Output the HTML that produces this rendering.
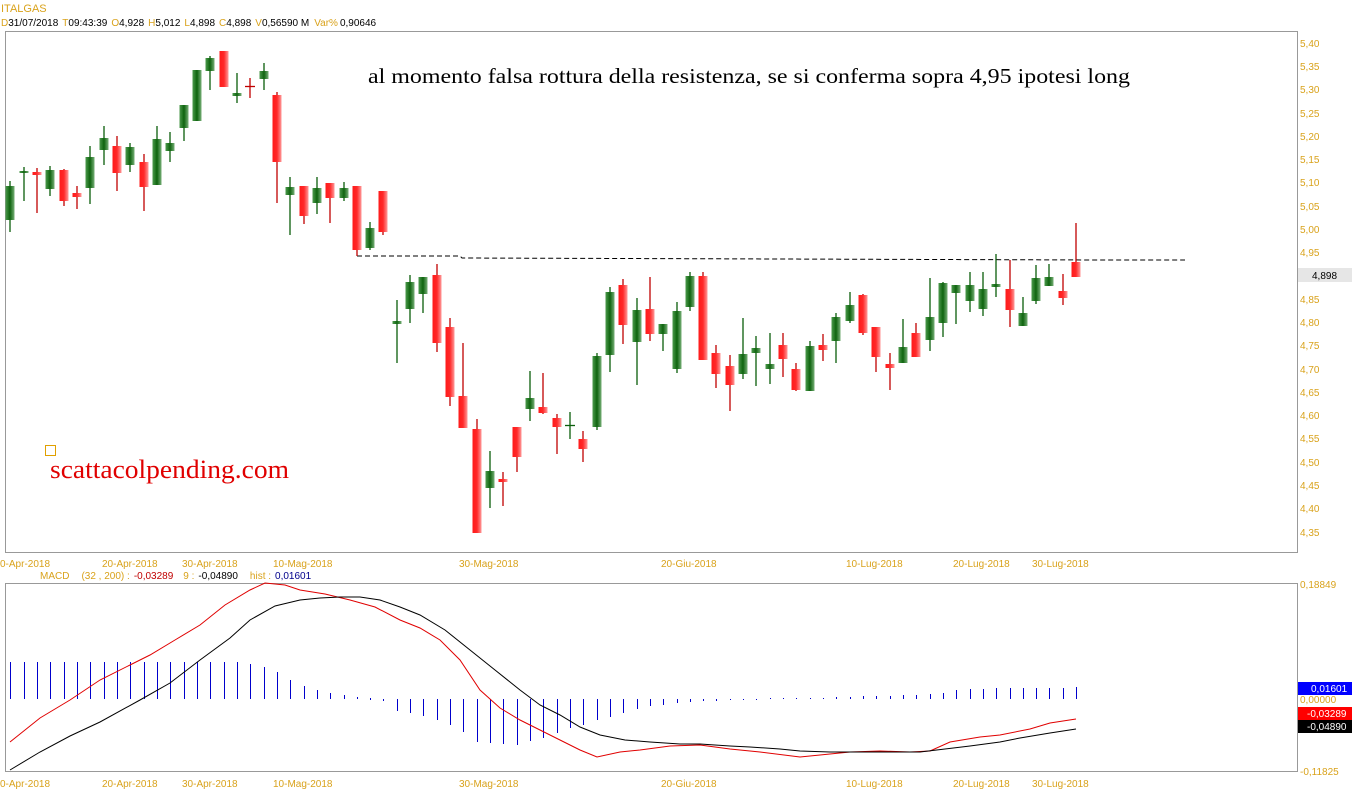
<!DOCTYPE html>
<html><head><meta charset="utf-8"><style>
body{margin:0;background:#fff;width:1352px;height:800px;overflow:hidden;font-family:"Liberation Sans",sans-serif}
svg{display:block}
.o{fill:#d9a21b}
.t{fill:#000}
text{font-family:"Liberation Sans",sans-serif;font-size:10px}
.ax{fill:#d9a21b;font-size:10px}
.wr{stroke:#c00000;stroke-width:1.3}
.wg{stroke:#0b5e0b;stroke-width:1.3}
.br{fill:url(#gr)}
.bg{fill:url(#gg)}
text.big{font-family:"Liberation Serif",serif;font-size:21px}
text.site{font-family:"Liberation Serif",serif;font-size:26px}
</style></head><body>
<svg width="1352" height="800" viewBox="0 0 1352 800">
<defs>
<linearGradient id="gr" x1="0" x2="1" y1="0" y2="0"><stop offset="0" stop-color="#ff1a1a"/><stop offset="0.5" stop-color="#ff2a2a"/><stop offset="1" stop-color="#ff9a9a"/></linearGradient>
<linearGradient id="gg" x1="0" x2="1" y1="0" y2="0"><stop offset="0" stop-color="#4d9a4d"/><stop offset="0.5" stop-color="#0e630e"/><stop offset="1" stop-color="#78b078"/></linearGradient>
</defs>
<text x="1" y="12" class="o" style="font-size:11px">ITALGAS</text>
<text x="1" y="26"><tspan class="o">D</tspan><tspan class="t">31/07/2018</tspan><tspan class="o" dx="4">T</tspan><tspan class="t">09:43:39</tspan><tspan class="o" dx="4">O</tspan><tspan class="t">4,928</tspan><tspan class="o" dx="4">H</tspan><tspan class="t">5,012</tspan><tspan class="o" dx="4">L</tspan><tspan class="t">4,898</tspan><tspan class="o" dx="4">C</tspan><tspan class="t">4,898</tspan><tspan class="o" dx="4">V</tspan><tspan class="t">0,56590 M</tspan><tspan class="o" dx="5">Var%</tspan><tspan class="t" dx="2">0,90646</tspan></text>
<rect x="5.5" y="31.5" width="1292" height="521" fill="none" stroke="#999"/>
<rect x="5.5" y="583.5" width="1292" height="188" fill="none" stroke="#999"/>
<g class="ax">
<text x="1300" y="47">5,40</text><text x="1300" y="70">5,35</text><text x="1300" y="93">5,30</text><text x="1300" y="117">5,25</text><text x="1300" y="140">5,20</text><text x="1300" y="163">5,15</text><text x="1300" y="186">5,10</text><text x="1300" y="210">5,05</text><text x="1300" y="233">5,00</text><text x="1300" y="256">4,95</text><text x="1300" y="303">4,85</text><text x="1300" y="326">4,80</text><text x="1300" y="349">4,75</text><text x="1300" y="373">4,70</text><text x="1300" y="396">4,65</text><text x="1300" y="419">4,60</text><text x="1300" y="442">4,55</text><text x="1300" y="466">4,50</text><text x="1300" y="489">4,45</text><text x="1300" y="512">4,40</text><text x="1300" y="536">4,35</text>
<text x="1300" y="588">0,18849</text><text x="1300" y="703">0,00000</text><text x="1300" y="775">-0,11825</text>
</g>
<rect x="1298" y="268" width="54" height="14" fill="#e6e6e6"/>
<text x="1312" y="279" fill="#000">4,898</text>
<g class="ax">
<text x="0" y="567">0-Apr-2018</text><text x="102" y="567">20-Apr-2018</text><text x="182" y="567">30-Apr-2018</text><text x="273" y="567">10-Mag-2018</text><text x="459" y="567">30-Mag-2018</text><text x="661" y="567">20-Giu-2018</text><text x="846" y="567">10-Lug-2018</text><text x="953" y="567">20-Lug-2018</text><text x="1032" y="567">30-Lug-2018</text>
<text x="0" y="787">0-Apr-2018</text><text x="102" y="787">20-Apr-2018</text><text x="182" y="787">30-Apr-2018</text><text x="273" y="787">10-Mag-2018</text><text x="459" y="787">30-Mag-2018</text><text x="661" y="787">20-Giu-2018</text><text x="846" y="787">10-Lug-2018</text><text x="953" y="787">20-Lug-2018</text><text x="1032" y="787">30-Lug-2018</text>
</g>
<text x="40" y="579"><tspan class="o">MACD</tspan><tspan class="o" dx="12">(32 , 200) :</tspan><tspan fill="#c00000" dx="4">-0,03289</tspan><tspan class="o" dx="10">9 :</tspan><tspan class="t" dx="4">-0,04890</tspan><tspan class="o" dx="12">hist :</tspan><tspan fill="#00008b" dx="4">0,01601</tspan></text>
<text x="368" y="83" class="big" fill="#000" textLength="762" lengthAdjust="spacingAndGlyphs">al momento falsa rottura della resistenza, se si conferma sopra 4,95 ipotesi long</text>
<rect x="45.5" y="445.5" width="10" height="10" fill="none" stroke="#e0a000"/>
<text x="50" y="478" class="site" fill="#e00000" textLength="239" lengthAdjust="spacingAndGlyphs">scattacolpending.com</text>
<polyline points="357,256 460,256 462,258 1100,260 1185,260" fill="none" stroke="#000" stroke-dasharray="5,3"/>
<g>
<line x1="10" x2="10" y1="181" y2="232" class="wg"/><rect x="5.5" y="186" width="9" height="34" class="bg"/>
<line x1="24" x2="24" y1="167" y2="201" class="wg"/><rect x="19.5" y="171" width="9" height="2" class="bg"/>
<line x1="37" x2="37" y1="168" y2="213" class="wr"/><rect x="32.5" y="172" width="9" height="3" class="br"/>
<line x1="50" x2="50" y1="166" y2="196" class="wg"/><rect x="45.5" y="170" width="9" height="19" class="bg"/>
<line x1="64" x2="64" y1="169" y2="206" class="wr"/><rect x="59.5" y="170" width="9" height="31" class="br"/>
<line x1="77" x2="77" y1="186" y2="209" class="wr"/><rect x="72.5" y="193" width="9" height="4" class="br"/>
<line x1="90" x2="90" y1="146" y2="204" class="wg"/><rect x="85.5" y="157" width="9" height="31" class="bg"/>
<line x1="104" x2="104" y1="126" y2="165" class="wg"/><rect x="99.5" y="138" width="9" height="12" class="bg"/>
<line x1="117" x2="117" y1="136" y2="191" class="wr"/><rect x="112.5" y="146" width="9" height="27" class="br"/>
<line x1="130" x2="130" y1="143" y2="172" class="wg"/><rect x="125.5" y="147" width="9" height="18" class="bg"/>
<line x1="144" x2="144" y1="154" y2="211" class="wr"/><rect x="139.5" y="162" width="9" height="25" class="br"/>
<line x1="157" x2="157" y1="126" y2="185" class="wg"/><rect x="152.5" y="139" width="9" height="46" class="bg"/>
<line x1="170" x2="170" y1="132" y2="162" class="wg"/><rect x="165.5" y="143" width="9" height="8" class="bg"/>
<line x1="184" x2="184" y1="105" y2="141" class="wg"/><rect x="179.5" y="105" width="9" height="23" class="bg"/>
<line x1="197" x2="197" y1="70" y2="121" class="wg"/><rect x="192.5" y="70" width="9" height="51" class="bg"/>
<line x1="210" x2="210" y1="56" y2="90" class="wg"/><rect x="205.5" y="58" width="9" height="13" class="bg"/>
<line x1="224" x2="224" y1="51" y2="87" class="wr"/><rect x="219.5" y="51" width="9" height="36" class="br"/>
<line x1="237" x2="237" y1="73" y2="103" class="wg"/><rect x="232.5" y="93" width="9" height="3" class="bg"/>
<line x1="250" x2="250" y1="78" y2="98" class="wr"/><line x1="245" x2="255" y1="86.5" y2="86.5" class="wr"/>
<line x1="264" x2="264" y1="63" y2="90" class="wg"/><rect x="259.5" y="71" width="9" height="8" class="bg"/>
<line x1="277" x2="277" y1="92" y2="203" class="wr"/><rect x="272.5" y="95" width="9" height="67" class="br"/>
<line x1="290" x2="290" y1="177" y2="235" class="wg"/><rect x="285.5" y="187" width="9" height="8" class="bg"/>
<line x1="304" x2="304" y1="186" y2="224" class="wr"/><rect x="299.5" y="186" width="9" height="30" class="br"/>
<line x1="317" x2="317" y1="177" y2="214" class="wg"/><rect x="312.5" y="188" width="9" height="15" class="bg"/>
<line x1="330" x2="330" y1="183" y2="223" class="wr"/><rect x="325.5" y="183" width="9" height="15" class="br"/>
<line x1="344" x2="344" y1="182" y2="201" class="wg"/><rect x="339.5" y="188" width="9" height="10" class="bg"/>
<line x1="357" x2="357" y1="186" y2="256" class="wr"/><rect x="352.5" y="186" width="9" height="64" class="br"/>
<line x1="370" x2="370" y1="222" y2="250" class="wg"/><rect x="365.5" y="228" width="9" height="20" class="bg"/>
<line x1="383" x2="383" y1="191" y2="235" class="wr"/><rect x="378.5" y="191" width="9" height="41" class="br"/>
<line x1="397" x2="397" y1="300" y2="363" class="wg"/><rect x="392.5" y="321" width="9" height="3" class="bg"/>
<line x1="410" x2="410" y1="275" y2="323" class="wg"/><rect x="405.5" y="282" width="9" height="27" class="bg"/>
<line x1="423" x2="423" y1="277" y2="313" class="wg"/><rect x="418.5" y="277" width="9" height="17" class="bg"/>
<line x1="437" x2="437" y1="264" y2="352" class="wr"/><rect x="432.5" y="275" width="9" height="68" class="br"/>
<line x1="450" x2="450" y1="318" y2="406" class="wr"/><rect x="445.5" y="327" width="9" height="70" class="br"/>
<line x1="463" x2="463" y1="343" y2="428" class="wr"/><rect x="458.5" y="396" width="9" height="32" class="br"/>
<line x1="477" x2="477" y1="419" y2="533" class="wr"/><rect x="472.5" y="429" width="9" height="104" class="br"/>
<line x1="490" x2="490" y1="451" y2="508" class="wg"/><rect x="485.5" y="471" width="9" height="17" class="bg"/>
<line x1="503" x2="503" y1="472" y2="506" class="wr"/><rect x="498.5" y="479" width="9" height="3" class="br"/>
<line x1="517" x2="517" y1="427" y2="472" class="wr"/><rect x="512.5" y="427" width="9" height="30" class="br"/>
<line x1="530" x2="530" y1="371" y2="421" class="wg"/><rect x="525.5" y="398" width="9" height="11" class="bg"/>
<line x1="543" x2="543" y1="373" y2="414" class="wr"/><rect x="538.5" y="407" width="9" height="6" class="br"/>
<line x1="557" x2="557" y1="414" y2="454" class="wr"/><rect x="552.5" y="418" width="9" height="9" class="br"/>
<line x1="570" x2="570" y1="412" y2="439" class="wg"/><line x1="565" x2="575" y1="425.5" y2="425.5" class="wg"/>
<line x1="583" x2="583" y1="431" y2="462" class="wr"/><rect x="578.5" y="439" width="9" height="10" class="br"/>
<line x1="597" x2="597" y1="353" y2="430" class="wg"/><rect x="592.5" y="356" width="9" height="71" class="bg"/>
<line x1="610" x2="610" y1="287" y2="372" class="wg"/><rect x="605.5" y="292" width="9" height="63" class="bg"/>
<line x1="623" x2="623" y1="279" y2="344" class="wr"/><rect x="618.5" y="285" width="9" height="40" class="br"/>
<line x1="637" x2="637" y1="298" y2="385" class="wg"/><rect x="632.5" y="310" width="9" height="32" class="bg"/>
<line x1="650" x2="650" y1="277" y2="341" class="wr"/><rect x="645.5" y="309" width="9" height="25" class="br"/>
<line x1="663" x2="663" y1="324" y2="351" class="wg"/><rect x="658.5" y="324" width="9" height="10" class="bg"/>
<line x1="677" x2="677" y1="302" y2="373" class="wg"/><rect x="672.5" y="311" width="9" height="58" class="bg"/>
<line x1="690" x2="690" y1="272" y2="311" class="wg"/><rect x="685.5" y="276" width="9" height="31" class="bg"/>
<line x1="703" x2="703" y1="272" y2="360" class="wr"/><rect x="698.5" y="276" width="9" height="84" class="br"/>
<line x1="716" x2="716" y1="345" y2="388" class="wr"/><rect x="711.5" y="353" width="9" height="21" class="br"/>
<line x1="730" x2="730" y1="355" y2="411" class="wr"/><rect x="725.5" y="366" width="9" height="19" class="br"/>
<line x1="743" x2="743" y1="318" y2="379" class="wg"/><rect x="738.5" y="354" width="9" height="20" class="bg"/>
<line x1="756" x2="756" y1="336" y2="386" class="wg"/><rect x="751.5" y="348" width="9" height="5" class="bg"/>
<line x1="770" x2="770" y1="333" y2="384" class="wg"/><rect x="765.5" y="364" width="9" height="5" class="bg"/>
<line x1="783" x2="783" y1="333" y2="377" class="wr"/><rect x="778.5" y="345" width="9" height="14" class="br"/>
<line x1="796" x2="796" y1="363" y2="391" class="wr"/><rect x="791.5" y="369" width="9" height="21" class="br"/>
<line x1="810" x2="810" y1="341" y2="391" class="wg"/><rect x="805.5" y="346" width="9" height="45" class="bg"/>
<line x1="823" x2="823" y1="334" y2="361" class="wr"/><rect x="818.5" y="345" width="9" height="5" class="br"/>
<line x1="836" x2="836" y1="313" y2="363" class="wg"/><rect x="831.5" y="317" width="9" height="24" class="bg"/>
<line x1="850" x2="850" y1="292" y2="323" class="wg"/><rect x="845.5" y="305" width="9" height="16" class="bg"/>
<line x1="863" x2="863" y1="294" y2="335" class="wr"/><rect x="858.5" y="295" width="9" height="38" class="br"/>
<line x1="876" x2="876" y1="327" y2="372" class="wr"/><rect x="871.5" y="327" width="9" height="30" class="br"/>
<line x1="890" x2="890" y1="353" y2="390" class="wr"/><rect x="885.5" y="364" width="9" height="4" class="br"/>
<line x1="903" x2="903" y1="319" y2="363" class="wg"/><rect x="898.5" y="347" width="9" height="16" class="bg"/>
<line x1="916" x2="916" y1="323" y2="357" class="wr"/><rect x="911.5" y="333" width="9" height="24" class="br"/>
<line x1="930" x2="930" y1="278" y2="351" class="wg"/><rect x="925.5" y="317" width="9" height="23" class="bg"/>
<line x1="943" x2="943" y1="282" y2="337" class="wg"/><rect x="938.5" y="283" width="9" height="40" class="bg"/>
<line x1="956" x2="956" y1="285" y2="324" class="wg"/><rect x="951.5" y="285" width="9" height="8" class="bg"/>
<line x1="970" x2="970" y1="272" y2="312" class="wg"/><rect x="965.5" y="285" width="9" height="16" class="bg"/>
<line x1="983" x2="983" y1="272" y2="316" class="wg"/><rect x="978.5" y="289" width="9" height="20" class="bg"/>
<line x1="996" x2="996" y1="254" y2="297" class="wg"/><rect x="991.5" y="284" width="9" height="3" class="bg"/>
<line x1="1010" x2="1010" y1="260" y2="327" class="wr"/><rect x="1005.5" y="289" width="9" height="21" class="br"/>
<line x1="1023" x2="1023" y1="297" y2="326" class="wg"/><rect x="1018.5" y="313" width="9" height="13" class="bg"/>
<line x1="1036" x2="1036" y1="265" y2="304" class="wg"/><rect x="1031.5" y="278" width="9" height="23" class="bg"/>
<line x1="1049" x2="1049" y1="264" y2="286" class="wg"/><rect x="1044.5" y="277" width="9" height="9" class="bg"/>
<line x1="1063" x2="1063" y1="274" y2="305" class="wr"/><rect x="1058.5" y="291" width="9" height="7" class="br"/>
<line x1="1076" x2="1076" y1="223" y2="277" class="wr"/><rect x="1071.5" y="262" width="9" height="15" class="br"/>
</g>
<g stroke="#0000cc" stroke-width="1">
<path d="M10.5 662V699M24.5 662V699M37.5 662V699M50.5 662V699M64.5 662V699M77.5 662V699M90.5 662V699M104.5 662V699M117.5 662V699M130.5 662V699M144.5 662V699M157.5 662V699M170.5 662V699M184.5 662V699M197.5 662V699M210.5 662V699M224.5 662V699M237.5 662V699M250.5 664V699M264.5 667V699M277.5 672V699M290.5 680V699M304.5 686V699M317.5 690V699M330.5 693V699M344.5 695V699M357.5 697V699M370.5 698V700M383.5 699V701M397.5 699V711M410.5 699V713M423.5 699V716M437.5 699V720M450.5 699V725M463.5 699V732M477.5 699V742M490.5 699V743M503.5 699V744M517.5 699V745M530.5 699V741M543.5 699V738M557.5 699V733M570.5 699V728M583.5 699V725M597.5 699V720M610.5 699V717M623.5 699V713M637.5 699V709M650.5 699V706M663.5 699V705M677.5 699V703M690.5 699V702M703.5 699V701M716.5 699V701M730.5 699V700M743.5 699V700M756.5 699V700M770.5 698V699M783.5 698V699M796.5 698V699M810.5 698V699M823.5 698V699M836.5 697V699M850.5 697V699M863.5 696V699M876.5 696V699M890.5 696V699M903.5 695V699M916.5 695V699M930.5 694V699M943.5 693V699M956.5 690V699M970.5 689V699M983.5 689V699M996.5 688V699M1010.5 688V699M1023.5 688V699M1036.5 688V699M1049.5 688V699M1063.5 688V699M1076.5 687V699"/>
</g>
<polyline fill="none" stroke="#e00000" stroke-width="1" points="10,742 40,718 70,700 100,680 130,665 150,655 175,640 200,625 225,605 250,590 265,583 285,585 300,590 325,594 350,600 375,607 400,620 420,628 440,640 460,660 480,690 500,708 520,720 540,730 560,740 580,750 597,757 620,752 640,750 670,746 700,745 730,749 760,752 800,757 830,754 850,752 880,751 910,752 930,751 950,742 980,737 1000,735 1030,729 1050,723 1076,719"/>
<polyline fill="none" stroke="#000" stroke-width="1" points="10,770 40,752 70,736 100,722 140,700 170,683 200,660 230,638 250,620 275,606 300,600 320,598 340,597 360,597 380,600 400,607 420,615 445,630 470,650 495,670 520,690 540,705 560,715 580,727 600,735 625,740 650,742 680,744 700,744 730,746 750,747 780,749 800,751 830,752 850,752 880,752 920,752 945,749 970,746 1000,742 1020,738 1050,733 1076,729"/>
<rect x="1298" y="682" width="54" height="13" fill="#0000ff"/><text x="1311" y="692" fill="#fff">0,01601</text>
<rect x="1298" y="707" width="54" height="13" fill="#ff0000"/><text x="1307" y="717" fill="#fff">-0,03289</text>
<rect x="1298" y="720" width="54" height="13" fill="#000"/><text x="1307" y="730" fill="#fff">-0,04890</text>
</svg>
</body></html>
